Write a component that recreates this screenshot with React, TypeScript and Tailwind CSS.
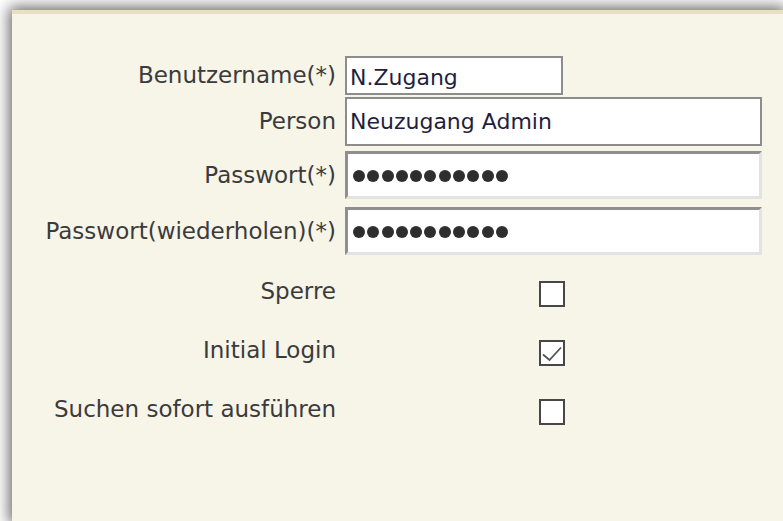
const font = { fontFamily: '"DejaVu Sans", Verdana, sans-serif' };

function Label({ children }: { children: string }) {
  return (
    <div className="w-[324px] shrink-0 text-right text-[23px] leading-none text-[#3b3b3b]">
      {children}
    </div>
  );
}

function PasswordDots({ count }: { count: number }) {
  return (
    <div className="flex gap-[2.3px] pl-[5px] pt-[2px]">
      {Array.from({ length: count }).map((_, i) => (
        <span key={i} className="block h-[12px] w-[12px] rounded-full bg-[#2e2e2e]" />
      ))}
    </div>
  );
}

function Checkbox({ checked }: { checked?: boolean }) {
  return (
    <div className="ml-[194px] mt-[4px] flex h-[26px] w-[26px] items-center justify-center border-2 border-[#474747] bg-white">
      {checked && (
        <svg viewBox="0 0 22 22" className="h-[22px] w-[22px]">
          <path d="M2 12.5 L8.5 18 L20 5.5" fill="none" stroke="#555" strokeWidth="1.8" />
        </svg>
      )}
    </div>
  );
}

export default function App() {
  const options = [
    { label: "Sperre", checked: false },
    { label: "Initial Login", checked: true },
    { label: "Suchen sofort ausführen", checked: false },
  ];

  return (
    <div className="h-[521px] w-[783px] overflow-hidden bg-white" style={font}>
      <div className="ml-[12px] mt-[10px] h-[511px] w-[771px] border-t-4 border-[#e9e0c0] bg-[#f7f4e8] pt-[42px] shadow-[0_0_14px_3px_rgba(0,0,0,0.6)]">
        <div className="flex flex-col">
          <div className="flex h-[39px] items-center gap-[9px]">
            <Label>Benutzername(*)</Label>
            <div className="flex h-[39px] w-[218px] items-center border-2 border-[#8d8d8d] bg-white pl-[3px] pt-[3px] text-[22px] text-[#1f1f3d]">
              N.Zugang
            </div>
          </div>

          <div className="mt-[2px] flex h-[49px] items-center gap-[9px]">
            <Label>Person</Label>
            <div className="flex h-[49px] w-[417px] items-center border-2 border-[#8d8d8d] bg-white pl-[3px] text-[22px] text-[#1f1f3d]">
              Neuzugang Admin
            </div>
          </div>

          <div className="mt-[5px] flex h-[48px] items-center gap-[9px]">
            <Label>Passwort(*)</Label>
            <div className="flex h-[48px] w-[417px] items-center border-[3px] border-t-[#8f8f8f] border-l-[#8f8f8f] border-r-[#e3e3e3] border-b-[#e3e3e3] bg-white">
              <PasswordDots count={11} />
            </div>
          </div>

          <div className="mt-[8px] flex h-[48px] items-center gap-[9px]">
            <Label>Passwort(wiederholen)(*)</Label>
            <div className="flex h-[48px] w-[417px] items-center border-[3px] border-t-[#8f8f8f] border-l-[#8f8f8f] border-r-[#e3e3e3] border-b-[#e3e3e3] bg-white">
              <PasswordDots count={11} />
            </div>
          </div>

          <div className="mt-[7px] flex flex-col">
            {options.map((o) => (
              <div key={o.label} className="flex h-[59px] items-center gap-[9px]">
                <Label>{o.label}</Label>
                <Checkbox checked={o.checked} />
              </div>
            ))}
          </div>
        </div>
      </div>
    </div>
  );
}
